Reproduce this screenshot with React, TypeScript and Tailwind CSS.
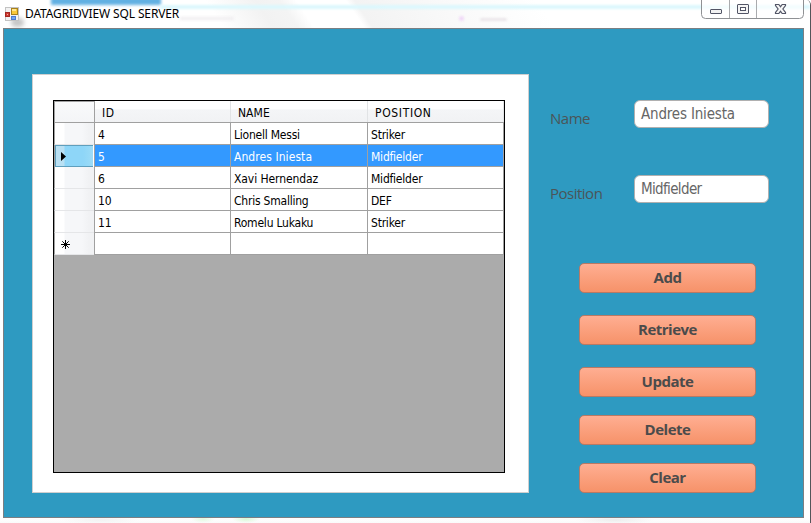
import type { ReactNode } from "react";

const tableRows = [
  { id: "4", name: "Lionell Messi", position: "Striker" },
  { id: "5", name: "Andres Iniesta", position: "Midfielder", selected: true },
  { id: "6", name: "Xavi Hernendaz", position: "Midfielder" },
  { id: "10", name: "Chris Smalling", position: "DEF" },
  { id: "11", name: "Romelu Lukaku", position: "Striker" },
  { id: "", name: "", position: "", fresh: true },
];

function FormIcon() {
  return (
    <svg width="14" height="15" viewBox="0 0 14 15" shapeRendering="crispEdges">
      <rect x="0.5" y="0.5" width="13" height="13" fill="#f2f2f2" stroke="#c3c3c3" />
      <rect x="6.5" y="1.5" width="6" height="6" fill="#f9c93a" stroke="#a8811d" />
      <rect x="7" y="2" width="4" height="2" fill="#ffe690" />
      <rect x="0.5" y="5.5" width="4" height="4" fill="#cf3a30" stroke="#a32822" />
      <rect x="2" y="7" width="1" height="1" fill="#f4b0a8" />
      <rect x="6.5" y="9.5" width="4" height="3" fill="#71a5f0" stroke="#4c7ad2" />
    </svg>
  );
}

function CaptionButtons() {
  return (
    <svg width="103" height="20" viewBox="0 0 103 20" className="block">
      <path d="M0.5 0V14.5Q0.5 18.5 4.5 18.5H98.5Q102.500 18.5 102.500 14.5V0" fill="#ffffff" fillOpacity="0.65" stroke="#8f9194" />
      <path d="M28.500 0V18M55.500 0V18" stroke="#a9abae" />
      <rect x="9.500" y="9.500" width="11" height="4" rx="0.5" fill="#f2f2f2" stroke="#525566" />
      <rect x="36.500" y="4.500" width="11" height="9" rx="0.5" fill="#f5f5f5" stroke="#525566" />
      <rect x="39.500" y="7.500" width="5" height="3" fill="#fff" stroke="#525566" />
      <path d="M74.500 4.500H77.800L79.500 6.700L81.200 4.500H84.500V5.500L81.900 9L84.500 12.500V13.500H81.200L79.500 11.300L77.800 13.500H74.500V12.500L77.100 9L74.500 5.500Z" fill="#f7f7f7" stroke="#525566" strokeWidth="1.2" />
    </svg>
  );
}

function TitleBar() {
  return (
    <header className="relative flex h-7 shrink-0 items-start justify-between overflow-hidden bg-[linear-gradient(56deg,#ffffff_0%,#ffffff_27%,#f2f2f2_33%,#f4f4f4_36%,#ffffff_38%,#ffffff_44%,#f3f3f3_45%,#fafafa_57%,#ffffff_67%)]">
      <div className="absolute left-[51px] top-[-3px] h-[8px] w-[110px] bg-[#62b0e2] blur-[1.5px]" />
      <div className="absolute left-[160px] top-[5px] h-[4px] w-[650px] bg-[#dcf8fd] blur-[1px]" />
      <div className="absolute left-[11px] top-[18px] h-[9px] w-[13px] rounded-full bg-[#c6c6c6] blur-[2px]" />
      <div className="absolute left-[180px] top-[17px] h-[3px] w-[54px] bg-[#efedef] blur-[1.5px]" />
      <div className="absolute left-[459px] top-[16px] h-[5px] w-[5px] rounded-full bg-[#f1d9f8] blur-[1px]" />
      <div className="absolute left-[480px] top-[18px] h-[3px] w-[27px] rounded-full bg-[#ebe6ea] blur-[1px]" />
      <div className="relative flex items-start pl-[5px] pt-[7px]">
        <FormIcon />
        <h1 className="ml-[6px] whitespace-nowrap font-['Noto_Sans',sans-serif] text-[12px] leading-[14px] tracking-[-0.13px] text-black">
          DATAGRIDVIEW SQL SERVER
        </h1>
      </div>
      <div className="relative mr-[6px]">
        <CaptionButtons />
      </div>
    </header>
  );
}

function HeaderCell({ children }: { children?: ReactNode }) {
  return (
    <div className="h-[21px] border-r border-[#e1e3e5] bg-[linear-gradient(#ffffff_0%,#ffffff_38%,#f4f5f7_42%,#f1f2f4_100%)] pl-[7px] leading-[24px]">
      {children}
    </div>
  );
}

function RowMarker({ selected, fresh }: { selected?: boolean; fresh?: boolean }) {
  if (selected) {
    return (
      <div className="border-l border-[#a0a0a0]">
        <div className="mr-px flex h-[22px] items-center border-y border-l border-[#5f9fbd] bg-[linear-gradient(90deg,#b9e0f3_0px,#b9e0f3_8px,#8ed6f8_9px,#8ed6f8_27px,#9bdbf7_36px)] pl-[5px]">
          <svg width="5" height="9" viewBox="0 0 5 9">
            <path d="M0 0L5 4.500L0 9Z" fill="#000" />
          </svg>
        </div>
      </div>
    );
  }
  return (
    <div className="flex items-center border-b border-l border-b-[#e5e6e8] border-l-[#a0a0a0] bg-[linear-gradient(90deg,#ffffff_0px,#ffffff_9px,#f6f7f9_10px,#f6f7f9_27px,#f1f2f4_34px)] pl-[6px] pt-px">
      {fresh && (
        <svg width="9" height="9" viewBox="0 0 9 9">
          <path d="M4.500 0V9M0 4.500H9M1.300 1.300L7.700 7.700M7.700 1.300L1.300 7.700" stroke="#000" />
        </svg>
      )}
    </div>
  );
}

function DataGrid() {
  return (
    <div className="h-[373px] w-[452px] border border-black bg-[#ababab] font-['DejaVu_Sans_Condensed','DejaVu_Sans',sans-serif] text-[12px] tracking-[-0.22px] text-black">
      <div className="grid h-[22px] grid-cols-[41px_136px_137px_136px] border-b border-[#a0a0a0] bg-white">
        <div className="h-[21px] border-x border-t border-[#a0a0a0] bg-[linear-gradient(#f9fafb,#f4f5f7)]" />
        <HeaderCell><span className="tracking-[0.6px]">ID</span></HeaderCell>
        <HeaderCell><span className="tracking-[0.05px]">NAME</span></HeaderCell>
        <HeaderCell><span className="tracking-[0.65px]">POSITION</span></HeaderCell>
      </div>
      {tableRows.map((row, index) => (
        <div key={index} className="grid h-[22px] grid-cols-[40px_137px_137px_136px] bg-white leading-[24px]">
          <RowMarker selected={row.selected} fresh={row.fresh} />
          {[row.id, row.name, row.position].map((value, column) => (
            <div
              key={column}
              className={`h-[22px] whitespace-nowrap border-b border-r border-[#a0a0a0] ${column === 0 ? "border-l" : ""} pl-[3px] ${row.selected ? "bg-[#3399ff] text-white" : "bg-white"}`}
            >
              <span className={column === 1 && row.selected ? "tracking-[0.07px]" : column === 1 && index === 2 ? "tracking-[-0.08px]" : "tracking-[-0.22px]"}>
                {value}
              </span>
            </div>
          ))}
        </div>
      ))}
    </div>
  );
}

function Field({ label, children }: { label: string; children: ReactNode }) {
  return (
    <div className="flex h-[28px]">
      <label className="w-[84px] pt-[7px] font-['Open_Sans',sans-serif] text-[15px] leading-[22px] tracking-[-0.5px] text-[#4a5558]">{label}</label>
      <div className="h-[28px] w-[135px] rounded-[6px] border border-[#b0b0b0] bg-white pl-[6px] font-['DejaVu_Sans_Condensed','DejaVu_Sans',sans-serif] text-[15px] leading-[26px] text-[#666666]">
        {children}
      </div>
    </div>
  );
}

function ActionButton({ children }: { children: ReactNode }) {
  return (
    <button className="block h-[30px] w-[177px] rounded-[5px] border border-[#b87964] bg-[linear-gradient(#ffae92,#f69269)] pb-[2px] font-['Open_Sans',sans-serif] text-[15px] font-bold leading-[26px] tracking-[-0.5px] text-[#4b4b4b]">
      {children}
    </button>
  );
}

export default function App() {
  return (
    <div className="flex h-[523px] w-[811px] flex-col overflow-hidden rounded-tr-[5px] border-r border-[#54565a] bg-white">
      <TitleBar />
      <main className="ml-[3px] flex h-[490px] w-[801px] shrink-0 border border-[#7b7f83] bg-[#2e9ac1]">
        <section className="ml-[28px] mt-[45px] h-[419px] w-[497px] border border-[#cfcfcf] bg-white pl-[20px] pt-[25px]">
          <DataGrid />
        </section>
        <section className="ml-[21px] pt-[71px]">
          <Field label="Name">
            <span className="tracking-[-0.18px]">Andres Iniesta</span>
          </Field>
          <div className="mt-[47px]">
            <Field label="Position">
              <span className="tracking-[-0.65px]">Midfielder</span>
            </Field>
          </div>
          <div className="ml-[29px] mt-[60px] flex flex-col">
            <div className="flex flex-col gap-[22px]">
              <ActionButton>Add</ActionButton>
              <ActionButton>Retrieve</ActionButton>
              <ActionButton>Update</ActionButton>
            </div>
            <div className="mt-[18px] flex flex-col gap-[18px]">
              <ActionButton>Delete</ActionButton>
              <ActionButton>Clear</ActionButton>
            </div>
          </div>
        </section>
      </main>
      <footer className="h-[5px] bg-[radial-gradient(ellipse_12px_4px_at_203px_1px,#e2f9e0,transparent),radial-gradient(ellipse_14px_4px_at_246px_1px,#d9f8d6,transparent),radial-gradient(ellipse_40px_4px_at_100px_2px,#f2f2f2,transparent),radial-gradient(ellipse_40px_4px_at_615px_2px,#ededed,transparent),linear-gradient(#ffffff,#fafafa)]" />
    </div>
  );
}
